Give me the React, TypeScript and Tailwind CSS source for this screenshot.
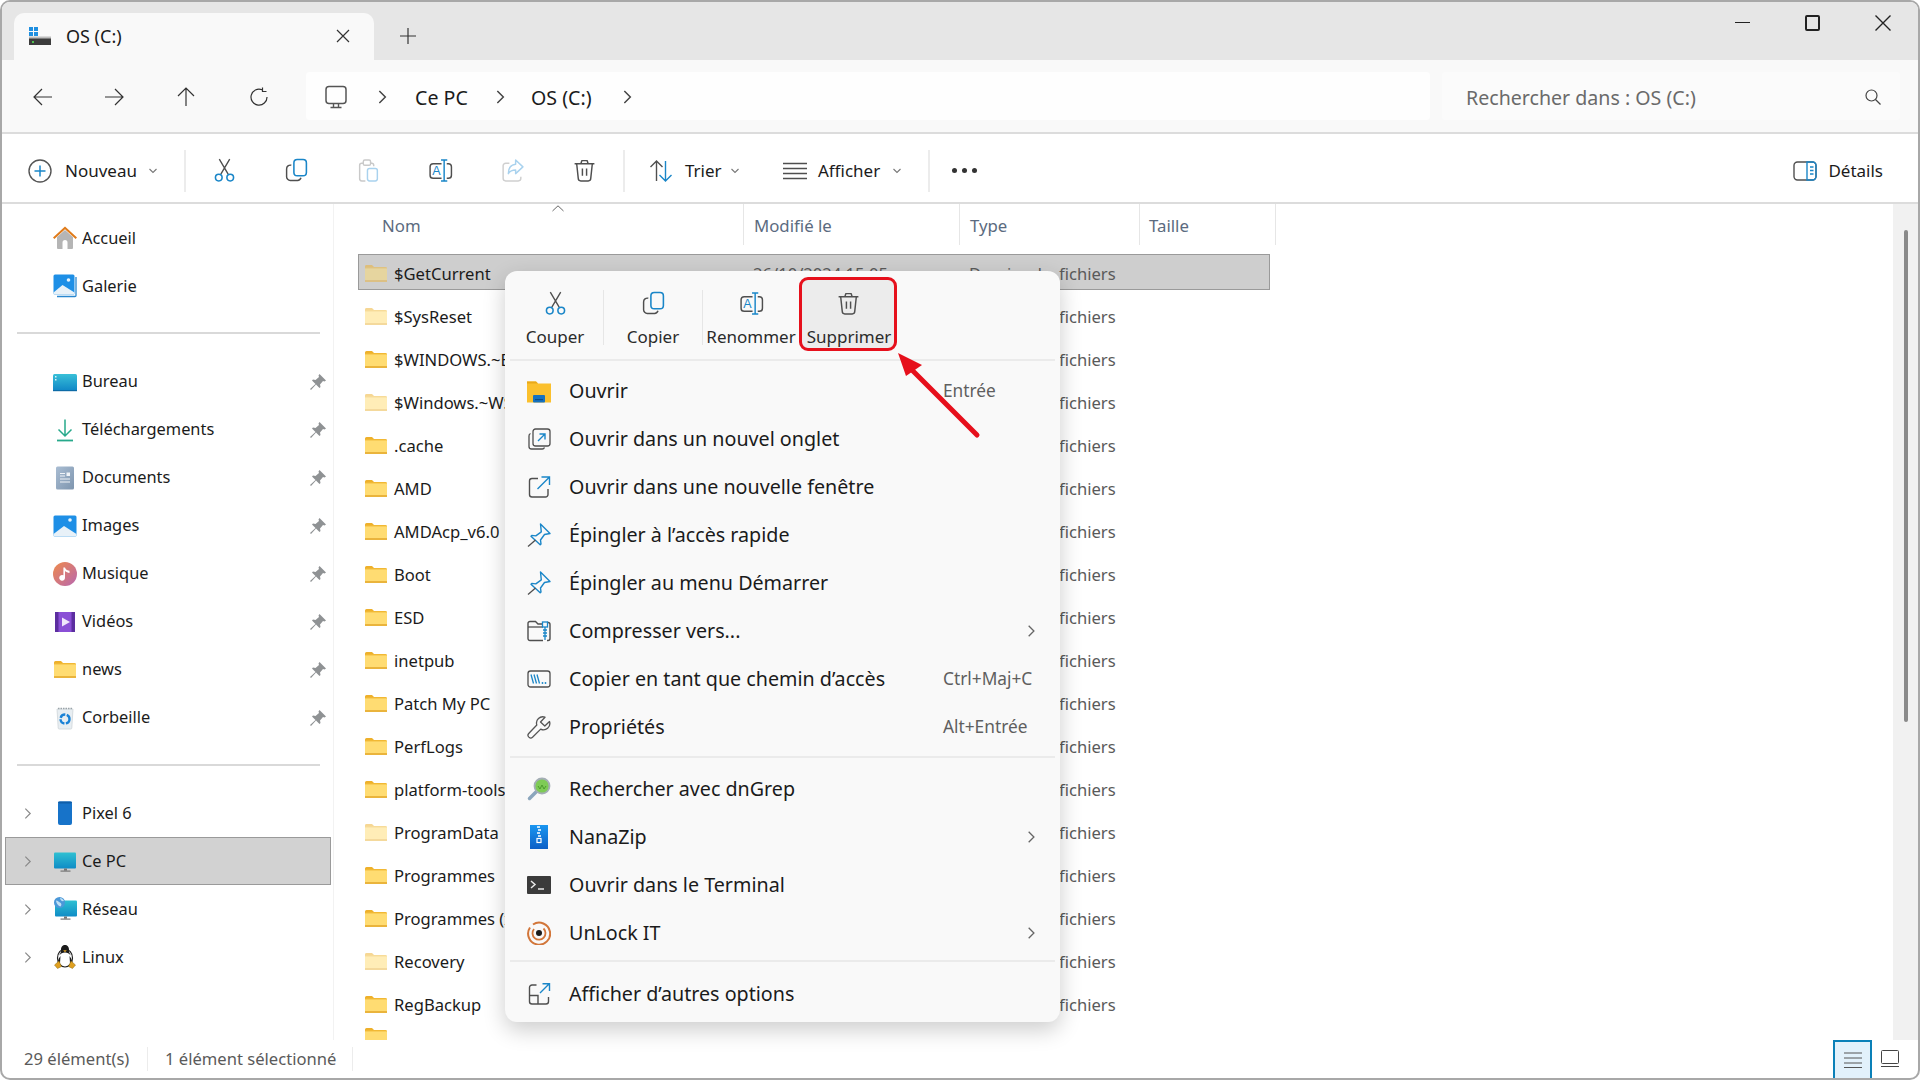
import React from "react";

const Svg = ({ size = 24, children, className = "" }: { size?: number; children: React.ReactNode; className?: string }) => (
  <svg width={size} height={size} viewBox="0 0 24 24" fill="none" className={`shrink-0 ${className}`}>
    {children}
  </svg>
);

const BLUE = "#1a86c8";
const GR = "#4f4f4f";

const Folder = ({ pale = false }: { pale?: boolean }) => (
  <svg width="22" height="17" viewBox="0 0 22 17" className="shrink-0" opacity={pale ? 0.5 : 1}>
    <path d="M0 1.5A1.5 1.5 0 0 1 1.5 0H7l2 2h11.5A1.5 1.5 0 0 1 22 3.5V5H0z" fill="#eeb02b" />
    <rect x="0" y="2.5" width="22" height="14.5" rx="1" fill="#f3bf3f" />
    <rect x="0" y="3.5" width="22" height="12.5" fill="#ffdc72" />
    <rect x="0" y="15" width="22" height="2" fill="#eab43c" />
  </svg>
);

const Scissors = () => (
  <Svg size={25}>
    <path d="M7 1 15.500 15.500M17 1 8.500 15.500" stroke={GR} strokeWidth="1.300" />
    <circle cx="6.500" cy="18.800" r="3.200" stroke={BLUE} strokeWidth="1.500" />
    <circle cx="17.500" cy="18.800" r="3.200" stroke={BLUE} strokeWidth="1.500" />
  </Svg>
);
const Copy = () => (
  <Svg size={25}>
    <rect x="9.500" y="1.500" width="12" height="15.500" rx="3.200" stroke={BLUE} strokeWidth="1.500" />
    <path d="M7 7A3.500 3.500 0 0 0 2.500 10.500V18A3.500 3.500 0 0 0 6 21.500h7a3.500 3.500 0 0 0 3.300-2.500" stroke={GR} strokeWidth="1.400" />
  </Svg>
);
const Paste = () => (
  <Svg size={25}>
    <path d="M7 5H5.500A2 2 0 0 0 3.500 7v13a2 2 0 0 0 2 2H9M14 5h1a2 2 0 0 1 2 2v1" stroke="#c9c9c9" strokeWidth="1.400" />
    <rect x="7" y="2" width="7" height="5" rx="1.500" stroke="#c9c9c9" strokeWidth="1.400" />
    <rect x="11" y="10" width="9.500" height="12" rx="2" stroke="#a9d2ee" strokeWidth="1.400" />
  </Svg>
);
const Rename = () => (
  <Svg size={25}>
    <path d="M13 5.500H5A3 3 0 0 0 2 8.500v8a3 3 0 0 0 3 3h8M18 5.500h1.500a3 3 0 0 1 3 3v8a3 3 0 0 1-3 3H18" stroke={GR} strokeWidth="1.400" />
    <path d="M15.500 2v20M12.500 2h6M12.500 22h6" stroke={BLUE} strokeWidth="1.400" />
    <text x="8" y="16.500" textAnchor="middle" fontSize="12" fontFamily="Liberation Sans, sans-serif" fill={BLUE}>A</text>
  </Svg>
);
const Share = () => (
  <Svg size={25}>
    <path d="M9 5H5.500A2.500 2.500 0 0 0 3 7.500v12A2.500 2.500 0 0 0 5.500 22h12a2.500 2.500 0 0 0 2.500-2.500V18" stroke="#cfcfcf" strokeWidth="1.400" />
    <path d="M15 2l7 6.500-7 6.500v-3.500c-3 0-5.500 1-7 3.500 0-5 2.500-8.500 7-9z" stroke="#a9d2ee" strokeWidth="1.400" strokeLinejoin="round" />
  </Svg>
);
const Trash = () => (
  <Svg size={25}>
    <path d="M2.500 5.500h19M8.500 5.500 9.500 2.500h5l1 3" stroke={GR} strokeWidth="1.400" strokeLinejoin="round" />
    <path d="M4.500 5.500 6 19.500A2.500 2.500 0 0 0 8.500 22h7a2.500 2.500 0 0 0 2.500-2.500l1.500-14" stroke={GR} strokeWidth="1.400" />
    <path d="M10 10v7M14 10v7" stroke={GR} strokeWidth="1.400" />
  </Svg>
);
const Chev = ({ down = false, color = "#777", size = 12 }: { down?: boolean; color?: string; size?: number }) => (
  <svg width={size} height={size} viewBox="0 0 12 12" fill="none" className="shrink-0">
    <path d={down ? "M2.500 4 6 7.500 9.500 4" : "M4 1.500 8.500 6 4 10.500"} stroke={color} strokeWidth="1.100" />
  </svg>
);
const Pin = () => (
  <svg width="16" height="16" viewBox="0 0 16 16" className="shrink-0">
    <path d="M9.500 0 16 6.500 14.500 7.500 13 7 10 10.500 10.500 13 9.500 14 6 10.500 1 16 0 15 5.500 10 2 6.500 3 5.500 5.500 6 9 3 8.500 1.500z" fill="#8f9294" />
  </svg>
);

const Home = () => (
  <Svg>
    <path d="M4 11 12 4l8 7v11a1 1 0 0 1-1 1h-4.500V16.500a2.500 2.500 0 0 0-5 0V23H5a1 1 0 0 1-1-1z" fill="#b5b5b5" />
    <path d="M0 11.500 12 .5l12 11-1.400 1.500L12 3.300 1.400 13z" fill="#e07b1a" />
  </Svg>
);
const ImageIcon = ({ stack = false }: { stack?: boolean }) => (
  <Svg>
    {stack && <path d="M23 3v18.500a1 1 0 0 1-1 1H4" stroke="#2a87cf" strokeWidth="1.300" />}
    <rect x="0.500" y={stack ? 0.5 : 1.5} width={stack ? 21 : 23} height={stack ? 20 : 21} rx="1.500" fill="#1e8fe6" />
    <circle cx={stack ? 15.5 : 17} cy="6" r="1.800" fill="#e8f4fc" />
    <path d={stack ? "M.5 18.500 9.500 11 21.500 18.500v.5a1.500 1.500 0 0 1-1.500 1.500H2A1.500 1.500 0 0 1 .5 19z" : "M.5 20 11 12l12.500 8v1a1.500 1.500 0 0 1-1.500 1.500H2A1.500 1.500 0 0 1 .5 21z"} fill="#e8f1f8" />
  </Svg>
);
const Desktop = () => (
  <Svg>
    <defs>
      <linearGradient id="dk" x1="0" y1="0" x2="0" y2="1"><stop stopColor="#39c0d8" /><stop offset="1" stopColor="#0f86c6" /></linearGradient>
    </defs>
    <rect x="0" y="4" width="24" height="17" rx="1.500" fill="url(#dk)" />
    <rect x="0" y="20" width="24" height="1.200" fill="#0d6ba6" />
    <rect x="2" y="6" width="1.500" height="1.500" fill="#d8f4f8" />
    <rect x="2" y="9" width="1.500" height="1.500" fill="#d8f4f8" />
  </Svg>
);
const Download = () => (
  <Svg>
    <path d="M12 1.500V18M5.500 11.500 12 18l6.500-6.500" stroke="#27a98b" strokeWidth="1.500" />
    <path d="M4 22.500h16" stroke="#27a98b" strokeWidth="1.800" />
  </Svg>
);
const Doc = () => (
  <Svg>
    <defs>
      <linearGradient id="dc" x1="0" y1="0" x2="1" y2="1"><stop stopColor="#a9bdd3" /><stop offset="1" stopColor="#7e95ae" /></linearGradient>
    </defs>
    <rect x="3" y="0.500" width="18" height="23" rx="1.500" fill="url(#dc)" />
    <path d="M7 7.500h5M7 10h5M7 13h10M7 16h10" stroke="#f0f4f8" strokeWidth="1.100" />
    <rect x="13.500" y="6.500" width="3.500" height="3.500" fill="#f0f4f8" />
  </Svg>
);
const Music = () => (
  <Svg>
    <defs>
      <linearGradient id="mu" x1="0" y1="0" x2="1" y2="1"><stop stopColor="#ef8a4b" /><stop offset="1" stopColor="#b867b0" /></linearGradient>
    </defs>
    <circle cx="12" cy="12" r="12" fill="url(#mu)" />
    <path d="M12 5.500v10.200a2.900 2.900 0 1 1-1.600-2.500V5.500zM12 5.500c.5 2.500 3 2.800 4.500 3.200v2.300c-1.700-.2-3.300-.8-4.500-2z" fill="#fff" />
  </Svg>
);
const Video = () => (
  <Svg>
    <rect x="2" y="2" width="20" height="20" rx="2" fill="#8a4fd6" />
    <rect x="2" y="2" width="3.500" height="20" fill="#5c2ea0" />
    <rect x="18.500" y="2" width="3.500" height="20" fill="#5c2ea0" />
    <path d="M9 7.500 17 12 9 16.500z" fill="#efe6fb" />
  </Svg>
);
const Bin = () => (
  <Svg>
    <path d="M4 3h16l-1.200 19a1 1 0 0 1-1 1H6.200a1 1 0 0 1-1-1z" fill="#e8eef2" stroke="#cfd5d9" strokeWidth=".8" />
    <path d="M5 2.500h14" stroke="#9aa3a9" strokeWidth="1.600" strokeDasharray="1.500 1" />
    <circle cx="12" cy="13" r="4.500" stroke="#1a82d6" strokeWidth="2.400" strokeDasharray="6 1.500" />
  </Svg>
);
const Phone = () => (
  <Svg>
    <rect x="5" y="0.500" width="14" height="23.500" rx="2" fill="#1773c9" />
    <rect x="5" y="0.500" width="14" height="2" rx="1" fill="#0f5ea9" />
  </Svg>
);
const Monitor = ({ net = false }: { net?: boolean }) => (
  <Svg>
    <defs>
      <linearGradient id={net ? "mn2" : "mn1"} x1="0" y1="0" x2="0" y2="1"><stop stopColor="#2fc0d2" /><stop offset="1" stopColor="#0f8cc6" /></linearGradient>
    </defs>
    <rect x={net ? 2 : 1} y="3.500" width="22" height="16" rx="1" fill={`url(#${net ? "mn2" : "mn1"})`} />
    <rect x="11" y="19.500" width="3" height="2.200" fill="#777" />
    <rect x="7.500" y="21.500" width="10" height="1.200" fill="#777" />
    {net && <circle cx="6.500" cy="5.500" r="5.500" fill="#4b98d8" />}
    {net && <path d="M3 3.500c2 0 2.500 1.500 4 2s2 2.500.5 4c-1.500-.5-4-2-4.500-6zM7 1c1.500 0 3 1 4 3-1.500.5-3.500 0-4-3z" fill="#bfe0f5" />}
  </Svg>
);
const Tux = () => (
  <Svg>
    <ellipse cx="12" cy="13" rx="7.500" ry="9" fill="#fff" stroke="#222" strokeWidth="1.200" />
    <path d="M12 0c3 0 4.200 2.500 4 5.500 0 2 1 3.500 1.800 5-1.500-2-3.500-3-5.800-3s-4.300 1-5.800 3c.8-1.500 1.800-3 1.800-5C7.800 2.500 9 0 12 0z" fill="#1b1b1b" />
    <path d="M7.500 11C5 14 4.500 17 5 19l2-1zM16.500 11c2.500 3 3 6 2.500 8l-2-1z" fill="#1b1b1b" />
    <path d="M1.500 20 6 16l2.500 5.500-4 2zM22.500 20 18 16l-2.500 5.500 4 2z" fill="#e0a020" stroke="#8a6a10" strokeWidth=".5" />
    <path d="M10.200 5.300h3.600L12 7.200z" fill="#e0a020" />
  </Svg>
);

const MenuFolder = () => (
  <Svg>
    <path d="M0 2.500h9l2 2h13v19H0z" fill="#fbc02d" />
    <path d="M0 2.500h9l2 2H0z" fill="#e9a91b" />
    <rect x="6" y="16" width="12" height="7.500" rx="1" fill="#1772bf" />
    <rect x="8" y="20" width="8" height="1.200" fill="#0c4d8a" />
  </Svg>
);
const NewTab = () => (
  <Svg>
    <path d="M3.500 6.500A2.500 2.500 0 0 0 2 9v10.500A2.500 2.500 0 0 0 4.500 22H15a2.500 2.500 0 0 0 2.500-1.500" stroke={GR} strokeWidth="1.300" />
    <rect x="6" y="2" width="17" height="17" rx="2.500" stroke={GR} strokeWidth="1.300" />
    <path d="M11 14l7-7M12.500 7H18v5.500" stroke={BLUE} strokeWidth="1.400" />
  </Svg>
);
const NewWin = () => (
  <Svg>
    <path d="M11 3.500H5A2.500 2.500 0 0 0 2.500 6v13.500A2.500 2.500 0 0 0 5 22h13.500a2.500 2.500 0 0 0 2.500-2.500V14" stroke={GR} strokeWidth="1.400" />
    <path d="M10.500 14 22 2.500M14.500 2H22.500v8" stroke={BLUE} strokeWidth="1.400" />
  </Svg>
);
const PinOutline = () => (
  <Svg>
    <path d="M13.500 1 23 10.500l-5.500 1-4 5.500.5 4-.8.800L4 13.200l.8-.8 4 .5 5.500-4z" stroke={BLUE} strokeWidth="1.400" strokeLinejoin="round" />
    <path d="M8.500 17 1 23.500" stroke={GR} strokeWidth="1.300" />
  </Svg>
);
const Zip = () => (
  <Svg>
    <path d="M16 21.500H3a2 2 0 0 1-2-2V4.500a2 2 0 0 1 2-2h5.500l2.500 2.500h5" stroke={GR} strokeWidth="1.400" />
    <path d="M1 8h15" stroke={GR} strokeWidth="1.300" />
    <path d="M20 3.500h1a2 2 0 0 1 2 2V19.500a2 2 0 0 1-2 2h-1" stroke={GR} strokeWidth="1.400" />
    <rect x="15.500" y="3" width="5" height="5" stroke={BLUE} strokeWidth="1.300" />
    <path d="M18 8v13M16 11h4M16 14h4M16 17h4" stroke={BLUE} strokeWidth="1.300" />
  </Svg>
);
const PathIcon = () => (
  <Svg>
    <rect x="1" y="4" width="22" height="16" rx="2.500" stroke={GR} strokeWidth="1.300" />
    <path d="M4 7.500l2.500 9M7 7.500l2.500 9M10 7.500l2.500 9" stroke={BLUE} strokeWidth="1.300" />
    <circle cx="15.500" cy="16" r=".9" fill={BLUE} />
    <circle cx="18.500" cy="16" r=".9" fill={BLUE} />
  </Svg>
);
const Wrench = () => (
  <Svg>
    <path d="M22.500 6.500 17.800 11 13.500 7 18 2.200A6.300 6.300 0 0 0 9.800 10L1.700 18.500a2.500 2.500 0 0 0 0 3.400l.4.400a2.500 2.500 0 0 0 3.400 0l8.200-8.200a6.300 6.300 0 0 0 8.800-7.600z" stroke="#555" strokeWidth="1.300" strokeLinejoin="round" />
  </Svg>
);
const Grep = () => (
  <Svg>
    <path d="M9.500 14.500 2.500 21.500" stroke="#8ba6bd" strokeWidth="3.500" strokeLinecap="round" />
    <circle cx="15" cy="9" r="7.500" fill="#7ecb55" stroke="#a4aeb5" strokeWidth="1.800" />
    <path d="M11 9l2 3 2-4 2 4 2-3" stroke="#4a9a2c" strokeWidth="1" fill="none" />
  </Svg>
);
const Nana = () => (
  <Svg>
    <defs>
      <linearGradient id="nz" x1="0" y1="0" x2="0" y2="1"><stop stopColor="#1a96f0" /><stop offset="1" stopColor="#0c5fc6" /></linearGradient>
    </defs>
    <rect x="3" y="0" width="18" height="24" fill="url(#nz)" />
    <path d="M10 2h3M11 5h3M10 8h3M11 11h3" stroke="#fff" strokeWidth="1.300" />
    <rect x="10" y="13.500" width="4" height="4" fill="none" stroke="#fff" strokeWidth="1.200" />
  </Svg>
);
const Term = () => (
  <Svg>
    <rect x="0" y="3" width="24" height="18" rx="1" fill="#3b3b3b" />
    <path d="M4 8l4 3.500-4 3.500" stroke="#e8e8e8" strokeWidth="1.500" />
    <path d="M11 16h6" stroke="#e8e8e8" strokeWidth="1.500" />
  </Svg>
);
const Unlock = () => (
  <Svg>
    <path d="M6 3.500a11 11 0 1 1-3 3" stroke="#d2763a" strokeWidth="2" />
    <path d="M16.500 7.500A6.500 6.500 0 1 1 7 8" stroke="#d2763a" strokeWidth="1.800" />
    <circle cx="12" cy="12" r="3" fill="#1a1a1a" />
  </Svg>
);
const MoreOpts = () => (
  <Svg>
    <path d="M9.500 3H5A2.500 2.500 0 0 0 2.500 5.500v14A2.500 2.500 0 0 0 5 22h14a2.500 2.500 0 0 0 2.500-2.500V15" stroke={GR} strokeWidth="1.400" />
    <path d="M2.500 13.500h8.500v8.500" stroke={GR} strokeWidth="1.400" />
    <path d="M13 11 22 2M15.500 1.800H22.500V9" stroke={BLUE} strokeWidth="1.400" />
  </Svg>
);

const files: [string, boolean][] = [
  ["$GetCurrent", true],
  ["$SysReset", true],
  ["$WINDOWS.~BT", false],
  ["$Windows.~WS", true],
  [".cache", false],
  ["AMD", false],
  ["AMDAcp_v6.0", false],
  ["Boot", false],
  ["ESD", false],
  ["inetpub", false],
  ["Patch My PC", false],
  ["PerfLogs", false],
  ["platform-tools", false],
  ["ProgramData", true],
  ["Programmes", false],
  ["Programmes (x86)", false],
  ["Recovery", true],
  ["RegBackup", false],
];

type Side = { icon: React.ReactNode; label: string; pin?: boolean; chev?: boolean; sel?: boolean };
const SideRow = ({ icon, label, pin, chev, sel }: Side) => (
  <div className={`ml-[3px] flex h-12 w-[326px] items-center border ${sel ? "border-[#9a9a9a] bg-[#d2d2d2]" : "border-transparent"}`}>
    <div className="flex w-[43px] justify-center">{chev && <Chev color="#8a8a8a" size={13} />}</div>
    <div className="ml-[4px] flex w-6 justify-center">{icon}</div>
    <span className="ml-[5px] flex-1 text-[16.400px] text-[#1b1b1b]">{label}</span>
    {pin && <div className="mr-[4px]"><Pin /></div>}
  </div>
);
const Divider = ({ mt }: { mt: string }) => <div className={`ml-[15px] h-[2px] w-[303px] bg-[#d9d9d9] ${mt}`} />;

type Mi = { icon: React.ReactNode; label: string; right?: string; sub?: boolean };
const MenuRow = ({ icon, label, right, sub }: Mi) => (
  <div className="flex h-12 items-center pl-[22px]">
    <div className="flex w-6 justify-center">{icon}</div>
    <span className="ml-[18px] flex-1 text-[19.700px] text-[#1b1b1b]">{label}</span>
    <div className="flex w-[117px] items-center whitespace-nowrap text-[17.300px] text-[#5f5f5f]">
      {right}
      {sub && <div className="ml-[81px]"><Chev color="#666" size={14} /></div>}
    </div>
  </div>
);
const TopAction = ({ icon, label }: { icon: React.ReactNode; label: string }) => (
  <div className="relative flex w-[98px] flex-col items-center pt-[20px]">
    {icon}
    <span className="mt-[9px] whitespace-nowrap text-[17px] leading-6 text-[#2b2b2b]">{label}</span>
  </div>
);
const ToolBtn = ({ children }: { children: React.ReactNode }) => <div className="flex w-[72px] justify-center">{children}</div>;
const VSep = () => <div className="h-[42px] w-[2px] bg-[#ececec]" />;

export default function App() {
  return (
    <div className="h-[1080px] w-[1920px] overflow-hidden bg-white font-['Noto_Sans',sans-serif]">
      <div className="relative flex h-full flex-col overflow-hidden rounded-[10px] border-2 border-[#a8a8a8] bg-white">
        {/* title bar */}
        <div className="flex h-[58px] shrink-0 items-end bg-[#e6e6e6] pl-[12px]">
          <div className="flex h-[47px] w-[360px] items-center rounded-t-[10px] bg-[#f9f9f9] pl-[15px]">
            <svg width="22" height="18" viewBox="0 0 22 18" className="mb-[2px] shrink-0">
              <rect x="0" y="0" width="4" height="4" fill="#1f8fe0" />
              <rect x="5" y="0" width="4" height="4" fill="#1f8fe0" />
              <rect x="0" y="5" width="4" height="4" fill="#1f8fe0" />
              <rect x="5" y="5" width="4" height="4" fill="#1f8fe0" />
              <rect x="0" y="10" width="22" height="8" fill="#3c3c3c" />
              <rect x="0" y="9.500" width="22" height="2" fill="#bdbdbd" />
              <rect x="3" y="14" width="2" height="2" fill="#4ec04e" />
            </svg>
            <span className="ml-[15px] flex-1 text-[18px] text-[#1b1b1b]">OS (C:)</span>
            <svg width="14" height="14" viewBox="0 0 14 14" className="mr-[24px] mb-[2px]"><path d="M1 1l12 12M13 1 1 13" stroke="#333" strokeWidth="1.200" /></svg>
          </div>
          <svg width="16" height="16" viewBox="0 0 16 16" className="mb-[16px] ml-[26px]"><path d="M8 0v16M0 8h16" stroke="#333" strokeWidth="1.200" /></svg>
          <div className="ml-auto flex self-start pt-[13.500px]">
            <div className="flex h-[14px] w-[69px] items-center justify-center"><div className="h-[1.500px] w-[15px] bg-[#222]" /></div>
            <div className="flex h-[14px] w-[70px] items-center justify-center"><div className="h-[16px] w-[15px] shrink-0 rounded-[2px] border-2 border-[#222]" /></div>
            <div className="flex h-[14px] w-[71px] items-center justify-center"><svg width="16" height="16" viewBox="0 0 16 16" className="shrink-0"><path d="M.5.500l15 15M15.500.500l-15 15" stroke="#222" strokeWidth="1.400" /></svg></div>
          </div>
        </div>
        {/* nav bar */}
        <div className="flex h-[74px] shrink-0 items-center border-b-2 border-[#dcdcdc] bg-[#f9f9f9] pl-[5px]">
          <div className="flex w-[71.500px] justify-center pt-[2px]"><svg width="20" height="20" viewBox="0 0 20 20"><path d="M19 10H1M9 2l-8 8 8 8" stroke="#333" strokeWidth="1.200" fill="none" /></svg></div>
          <div className="flex w-[71.500px] justify-center pt-[2px]"><svg width="20" height="20" viewBox="0 0 20 20"><path d="M1 10h18M11 2l8 8-8 8" stroke="#333" strokeWidth="1.200" fill="none" /></svg></div>
          <div className="flex w-[71.500px] justify-center pt-[2px]"><svg width="20" height="20" viewBox="0 0 20 20"><path d="M10 19V1M2 9l8-8 8 8" stroke="#333" strokeWidth="1.200" fill="none" /></svg></div>
          <div className="flex w-[71.500px] justify-center pl-[4px] pt-[2px]"><svg width="20" height="20" viewBox="0 0 20 20"><path d="M13 2.700A8 8 0 1 0 18 10M13.500 .5V4.500H17.500" stroke="#333" strokeWidth="1.200" fill="none" /></svg></div>
          <div className="ml-[13px] flex h-[48px] w-[1124px] items-center rounded-[4px] bg-[#fefefe] pl-[18px] pt-[2px] text-[19.600px] text-[#1b1b1b]">
            <svg width="24" height="24" viewBox="0 0 24 24"><rect x="2" y="1.500" width="20" height="17" rx="3" stroke="#555" strokeWidth="1.500" fill="none" /><path d="M9.500 19v3M14.500 19v3M6.500 22.500h11" stroke="#555" strokeWidth="1.400" /></svg>
            <div className="ml-[26px]"><Chev color="#444" size={16} /></div>
            <span className="ml-[25px] w-[68px] whitespace-nowrap pt-[2px]">Ce PC</span>
            <div className="ml-[9px]"><Chev color="#444" size={16} /></div>
            <span className="ml-[23px] w-[64px] whitespace-nowrap pt-[2px]">OS (C:)</span>
            <div className="ml-[24px]"><Chev color="#444" size={16} /></div>
          </div>
          <div className="ml-[12px] flex h-[48px] w-[458px] items-center rounded-[4px] bg-[#fbfbfb] pl-[24px] pr-[19px] pt-[2px] text-[19.600px] text-[#6a6a6a]">
            <span className="flex-1 pt-[2px]">Rechercher dans : OS (C:)</span>
            <svg width="16" height="16" viewBox="0 0 16 16"><circle cx="6.500" cy="6.500" r="5.500" stroke="#444" strokeWidth="1.200" fill="none" /><path d="M10.500 10.500 15.500 15.500" stroke="#444" strokeWidth="1.300" /></svg>
          </div>
        </div>
        {/* toolbar */}
        <div className="flex h-[70px] shrink-0 items-center border-b-2 border-[#dcdcdc] pl-[26px] pt-[5px] text-[17px] text-[#1b1b1b]">
          <svg width="24" height="24" viewBox="0 0 24 24"><circle cx="12" cy="12" r="11" stroke="#555" strokeWidth="1.400" fill="none" /><path d="M12 6.500v11M6.500 12h11" stroke={BLUE} strokeWidth="1.500" /></svg>
          <span className="ml-[13px] w-[82px]">Nouveau</span>
          <Chev down />
          <div className="ml-[25px]"><VSep /></div>
          <div className="ml-[2px] flex">
            <ToolBtn><Scissors /></ToolBtn>
            <ToolBtn><Copy /></ToolBtn>
            <ToolBtn><Paste /></ToolBtn>
            <ToolBtn><Rename /></ToolBtn>
            <ToolBtn><Share /></ToolBtn>
            <ToolBtn><Trash /></ToolBtn>
          </div>
          <div className="ml-[3px]"><VSep /></div>
          <div className="ml-[24px]">
            <Svg>
              <path d="M7.500 22V2M1.500 8l6-6 6 6" stroke={GR} strokeWidth="1.400" />
              <path d="M16.500 2v20M10.500 16l6 6 6-6" stroke={BLUE} strokeWidth="1.400" />
            </Svg>
          </div>
          <span className="ml-[12px] w-[44px]">Trier</span>
          <Chev down />
          <div className="ml-[42px]">
            <Svg>
              <path d="M0 4.500h24M0 9.500h24M0 14.500h24M0 19.500h24" stroke={GR} strokeWidth="1.400" />
            </Svg>
          </div>
          <span className="ml-[11px] w-[73px]">Afficher</span>
          <Chev down />
          <div className="ml-[25px]"><VSep /></div>
          <div className="ml-[22px] flex gap-[5px]">
            <div className="size-[5px] rounded-full bg-[#333]" /><div className="size-[5px] rounded-full bg-[#333]" /><div className="size-[5px] rounded-full bg-[#333]" />
          </div>
          <div className="ml-auto flex items-center pr-[35px]">
            <Svg>
              <rect x="1" y="3" width="22" height="18" rx="3.500" stroke={GR} strokeWidth="1.400" />
              <path d="M14 3h5.500A3.500 3.500 0 0 1 23 6.500v11a3.500 3.500 0 0 1-3.500 3.500H14z" stroke={BLUE} strokeWidth="1.400" />
              <path d="M17 8h3.500M17 11.500h3.500M17 15h3.500" stroke={BLUE} strokeWidth="1.300" />
            </Svg>
            <span className="ml-[11px]">Détails</span>
          </div>
        </div>
        {/* body */}
        <div className="flex h-[836px] shrink-0 overflow-hidden">
          <div className="w-[332px] shrink-0 border-r border-[#f2f2f2] pt-[10px]">
            <SideRow icon={<Home />} label="Accueil" />
            <SideRow icon={<ImageIcon stack />} label="Galerie" />
            <Divider mt="mt-[22px]" />
            <div className="mt-[23.500px]">
              <SideRow icon={<Desktop />} label="Bureau" pin />
              <SideRow icon={<Download />} label="Téléchargements" pin />
              <SideRow icon={<Doc />} label="Documents" pin />
              <SideRow icon={<ImageIcon />} label="Images" pin />
              <SideRow icon={<Music />} label="Musique" pin />
              <SideRow icon={<Video />} label="Vidéos" pin />
              <SideRow icon={<Folder />} label="news" pin />
              <SideRow icon={<Bin />} label="Corbeille" pin />
            </div>
            <Divider mt="mt-[22.500px]" />
            <div className="mt-[23px]">
              <SideRow icon={<Phone />} label="Pixel 6" chev />
              <SideRow icon={<Monitor />} label="Ce PC" chev sel />
              <SideRow icon={<Monitor net />} label="Réseau" chev />
              <SideRow icon={<Tux />} label="Linux" chev />
            </div>
          </div>
          <div className="relative min-w-0 flex-1 overflow-hidden">
            <div className="flex h-[41px] text-[16.800px] text-[#5b6b80]">
              <div className="w-[410px] border-r border-[#e6e6e6] pl-[48px] pt-[9px]">Nom</div>
              <div className="w-[216px] border-r border-[#e6e6e6] pl-[10px] pt-[9px]">Modifié le</div>
              <div className="w-[180px] border-r border-[#e6e6e6] pl-[10px] pt-[9px]">Type</div>
              <div className="w-[136px] border-r border-[#e6e6e6] pl-[9px] pt-[9px]">Taille</div>
            </div>
            <svg width="12" height="7" viewBox="0 0 12 7" className="absolute left-[218px] top-[1px]"><path d="M.5 6 6 .8 11.500 6" stroke="#666" strokeWidth="1" fill="none" /></svg>
            <div className="pt-[9px]">
              {files.map(([name, pale], i) => (
                <div key={name} className={`mb-[7px] ml-[24px] flex h-9 w-[912px] items-center border pl-[6px] pt-[2px] text-[16.600px] ${i === 0 ? "border-[#9a9a9a] bg-[#cecece]" : "border-transparent"}`}>
                  <Folder pale={pale} />
                  <span className="ml-[7px] w-[359px] whitespace-nowrap pt-[3px] text-[#1b1b1b]">{name}</span>
                  {i === 0 ? (
                    <>
                      <span className="w-[216px] whitespace-nowrap pt-[3px] text-[#5a5a5a]">26/10/2024 15:05</span>
                      <span className="inline-block w-[90px] pt-[3px] text-[#5a5a5a]">Dossier de</span>
                    </>
                  ) : (
                    <div className="w-[306px]" />
                  )}
                  <span className="whitespace-nowrap pt-[3px] text-[#5a5a5a]">fichiers</span>
                </div>
              ))}
              <div className="ml-[24px] pl-[7px]"><Folder /></div>
            </div>
          </div>
          <div className="flex w-[25px] shrink-0 justify-center bg-[#f1f1f1] pt-[26px]">
            <div className="h-[492px] w-[4px] rounded-full bg-[#8a8a8a]" />
          </div>
        </div>
        {/* status bar */}
        <div className="flex h-[38px] shrink-0 items-center text-[16.600px] text-[#5a5a5a]">
          <span className="ml-[22px] w-[123px]">29 élément(s)</span>
          <div className="h-[24px] w-[1px] bg-[#ececec]" />
          <span className="ml-[17px] w-[187px] whitespace-nowrap">1 élément sélectionné</span>
          <div className="h-[24px] w-[1px] bg-[#ececec]" />
          <div className="ml-auto flex items-center pr-[19px]">
            <div className="flex h-[38px] w-[39px] items-center justify-center border-2 border-b-0 border-[#0a80b8] bg-[#e2f1fb]">
              <svg width="18" height="16" viewBox="0 0 18 16"><path d="M0 1h18M0 6h18M0 11h18M0 15.500h18" stroke="#555" strokeWidth="1" /></svg>
            </div>
            <svg width="18" height="18" viewBox="0 0 18 18" className="ml-[9px]"><rect x=".5" y=".5" width="17" height="13" rx="1" stroke="#444" strokeWidth="1" fill="none" /><path d="M0 16.500h18" stroke="#444" strokeWidth="1" /></svg>
          </div>
        </div>

        {/* context menu */}
        <div className="absolute left-[503px] top-[269px] h-[751px] w-[555px] rounded-[12px] bg-[#f9f9f9] shadow-[0_8px_22px_rgba(0,0,0,0.2)]">
          <div className="flex h-[88px] pl-[1px]">
            <TopAction icon={<Scissors />} label="Couper" />
            <TopAction icon={<Copy />} label="Copier" />
            <TopAction icon={<Rename />} label="Renommer" />
            <div className="relative flex w-[98px] flex-col items-center pt-[20px]">
              <div className="absolute left-[-1px] top-[6px] h-[74px] w-[98px] rounded-[9px] border-[3px] border-[#e6101c] bg-[#ececec]" />
              <div className="relative flex flex-col items-center">
                <Trash />
                <span className="mt-[9px] text-[17px] leading-6 text-[#2b2b2b]">Supprimer</span>
              </div>
            </div>
          </div>
          <div className="absolute left-[98px] top-[19px] h-[55px] w-[1px] bg-[#e6e6e6]" />
          <div className="absolute left-[197px] top-[19px] h-[55px] w-[1px] bg-[#e6e6e6]" />
          <div className="mx-[5px] h-[2px] bg-[#ebebeb]" />
          <div className="mt-[6px]">
            <MenuRow icon={<MenuFolder />} label="Ouvrir" right="Entrée" />
            <MenuRow icon={<NewTab />} label="Ouvrir dans un nouvel onglet" />
            <MenuRow icon={<NewWin />} label="Ouvrir dans une nouvelle fenêtre" />
            <MenuRow icon={<PinOutline />} label="Épingler à l’accès rapide" />
            <MenuRow icon={<PinOutline />} label="Épingler au menu Démarrer" />
            <MenuRow icon={<Zip />} label="Compresser vers..." sub />
            <MenuRow icon={<PathIcon />} label="Copier en tant que chemin d’accès" right="Ctrl+Maj+C" />
            <MenuRow icon={<Wrench />} label="Propriétés" right="Alt+Entrée" />
          </div>
          <div className="mx-[5px] mt-[5px] h-[2px] bg-[#ebebeb]" />
          <div className="mt-[7px]">
            <MenuRow icon={<Grep />} label="Rechercher avec dnGrep" />
            <MenuRow icon={<Nana />} label="NanaZip" sub />
            <MenuRow icon={<Term />} label="Ouvrir dans le Terminal" />
            <MenuRow icon={<Unlock />} label="UnLock IT" sub />
          </div>
          <div className="mx-[5px] mt-[3px] h-[2px] bg-[#ebebeb]" />
          <div className="mt-[8px]">
            <MenuRow icon={<MoreOpts />} label="Afficher d’autres options" />
          </div>
        </div>
        {/* annotation arrow */}
        <svg width="100" height="100" viewBox="0 0 100 100" className="absolute left-[890px] top-[345px]" fill="none">
          <path d="M85 88 20 23" stroke="#e6101c" strokeWidth="5" strokeLinecap="round" />
          <path d="M6 6 30 18 14 29z" fill="#e6101c" />
        </svg>
      </div>
    </div>
  );
}
